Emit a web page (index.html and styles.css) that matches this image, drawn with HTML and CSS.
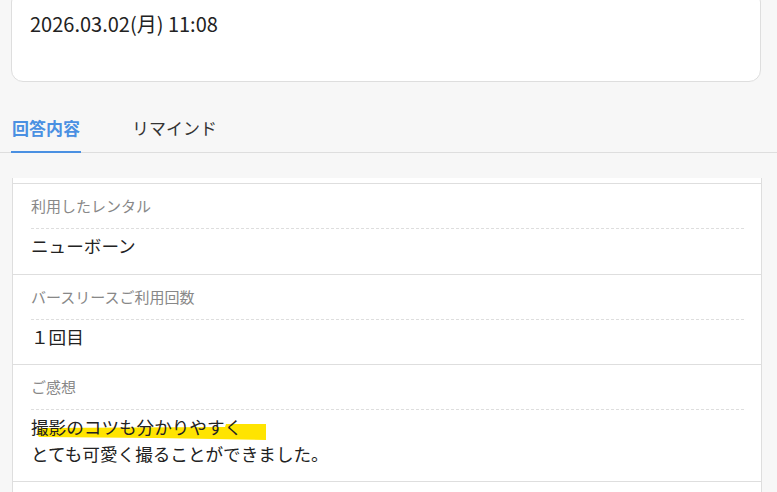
FILE: index.html
```html
<!DOCTYPE html>
<html lang="ja">
<head>
    <meta charset="UTF-8">
    <meta name="viewport" content="width=device-width, initial-scale=1.0">
    <title>回答内容</title>
    <link rel="stylesheet" href="styles.css">
</head>
<body>
    <div class="date-card">
        <p class="date">2026.03.02(月) 11:08</p>
    </div>

    <div class="tabs">
        <div class="tab active">回答内容</div>
        <div class="tab">リマインド</div>
    </div>

    <div class="answers">
        <div class="answer">
            <div class="answer-label">利用したレンタル</div>
            <div class="answer-value">ニューボーン</div>
        </div>
        <div class="answer">
            <div class="answer-label">バースリースご利用回数</div>
            <div class="answer-value">１回目</div>
        </div>
        <div class="answer">
            <div class="answer-label">ご感想</div>
            <div class="answer-value">
                <svg class="marker" width="231" height="16" viewBox="0 0 231 16">
                    <path d="M4,4 L190,3 L191,0 L231,0 L231,16 L120,14 L4,13 Q0,9 4,4 Z" fill="#ffe400"/>
                </svg>
                <span class="value-text">撮影のコツも分かりやすく<br>とても可愛く撮ることができました。</span>
            </div>
        </div>
        <div class="answer answer-next"></div>
    </div>
</body>
</html>
```

FILE: styles.css
```css
body {
    margin: 0;
    background-color: #f7f7f7;
    font-family: "Noto Sans CJK JP", "Noto Sans", sans-serif;
    color: #222;
    overflow: hidden;
}
.date-card {
    box-sizing: border-box;
    width: 750px;
    height: 92px;
    margin: -10px 0 0 11px;
    padding: 20px 18px 0;
    background-color: white;
    border: 1px solid #dedede;
    border-radius: 12px;
}
.date {
    margin: 0;
    font-size: 20px;
    line-height: 26px;
}
.tabs {
    display: flex;
    margin-top: 24px;
    padding-left: 11px;
    border-bottom: 1px solid #dedede;
}
.tab {
    padding: 10px 1px 11px;
    margin-right: 50px;
    margin-bottom: -1px;
    font-size: 17px;
    line-height: 24px;
    color: #333;
    border-bottom: 2px solid transparent;
}
.tab.active {
    color: #4a90e2;
    font-weight: bold;
    border-bottom-color: #4a90e2;
}
.answers {
    box-sizing: border-box;
    width: 750px;
    margin: 25px 0 0 12px;
    padding-top: 5px;
    background-color: white;
    border-left: 1px solid #dedede;
    border-right: 1px solid #dedede;
}
.answer {
    padding: 0 17px 0 18px;
    border-top: 1px solid #dedede;
}
.answer-next {
    height: 40px;
}
.answer-label {
    padding: 12px 0;
    font-size: 15px;
    line-height: 20px;
    color: #888;
    border-bottom: 1px dashed #dedede;
}
.answer-value {
    position: relative;
    padding: 4px 0 14.2px;
    font-size: 17.6px;
    line-height: 26.4px;
}
.marker {
    position: absolute;
    left: 4px;
    top: 14px;
}
.value-text {
    position: relative;
}
```
